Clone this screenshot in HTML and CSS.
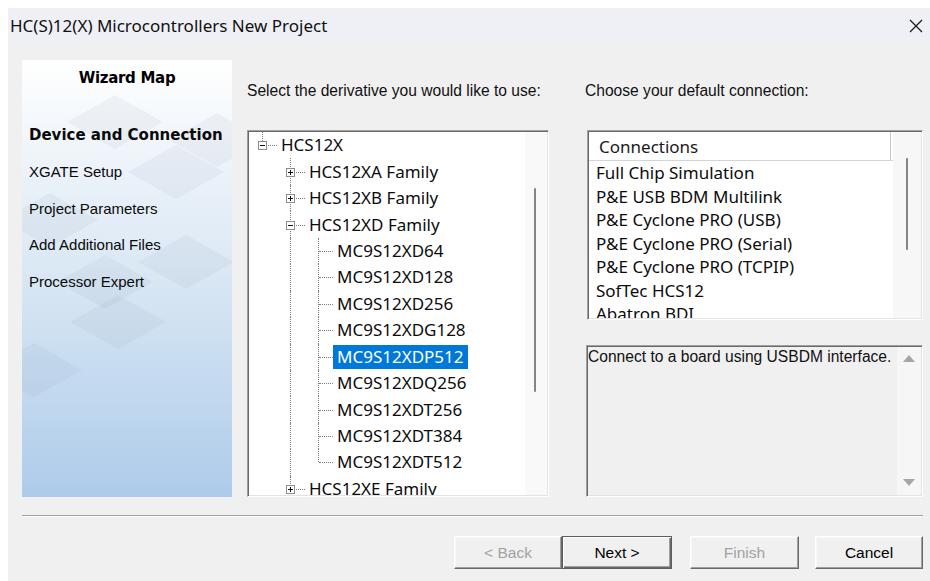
FILE: index.html
```html
<!DOCTYPE html>
<html lang="en">
<head>
<meta charset="utf-8">
<title>HC(S)12(X) Microcontrollers New Project</title>
<link rel="stylesheet" href="styles.css">
</head>
<body>
<div class="window">
  <header class="titlebar">
    <span class="title">HC(S)12(X) Microcontrollers New Project</span>
    <button class="close" aria-label="Close">
      <svg width="14" height="14" viewBox="0 0 14 14"><path d="M1 1L13 13M13 1L1 13" stroke="#1b1b1b" stroke-width="1.3" fill="none"/></svg>
    </button>
  </header>

  <div class="dialog">
    <div class="main">
      <aside class="wizard-map">
        <svg class="map-art" width="210" height="437" viewBox="0 0 210 437" aria-hidden="true">
          <g fill="#6f8299" fill-opacity="0.07">
            <polygon points="93,35 141,62 93,89 45,62"/>
            <polygon points="195,53 243,80 195,107 147,80"/>
            <polygon points="154,85 202,112 154,139 106,112"/>
            <polygon points="28,133 76,160 28,187 -20,160"/>
            <polygon points="164,175 212,202 164,229 116,202"/>
            <polygon points="83,195 131,222 83,249 35,222"/>
            <polygon points="96,235 144,262 96,289 48,262"/>
            <polygon points="12,283 60,310 12,337 -36,310"/>
          </g>
        </svg>
        <h2 class="map-title">Wizard Map</h2>
        <ul class="steps">
          <li class="current">Device and Connection</li>
          <li>XGATE Setup</li>
          <li>Project Parameters</li>
          <li>Add Additional Files</li>
          <li>Processor Expert</li>
        </ul>
      </aside>

      <section class="col col-derivative">
        <p class="prompt">Select the derivative you would like to use:</p>
        <div class="tree sunken">
          <div class="tree-rows">
            <div class="row"><span class="c l"><i class="exp minus"></i></span><span class="lbl">HCS12X</span></div>
            <div class="row"><span class="c"></span><span class="c t"><i class="exp plus"></i></span><span class="lbl">HCS12XA Family</span></div>
            <div class="row"><span class="c"></span><span class="c t"><i class="exp plus"></i></span><span class="lbl">HCS12XB Family</span></div>
            <div class="row"><span class="c"></span><span class="c t"><i class="exp minus"></i></span><span class="lbl">HCS12XD Family</span></div>
            <div class="row"><span class="c"></span><span class="c v"></span><span class="c t"></span><span class="lbl">MC9S12XD64</span></div>
            <div class="row"><span class="c"></span><span class="c v"></span><span class="c t"></span><span class="lbl">MC9S12XD128</span></div>
            <div class="row"><span class="c"></span><span class="c v"></span><span class="c t"></span><span class="lbl">MC9S12XD256</span></div>
            <div class="row"><span class="c"></span><span class="c v"></span><span class="c t"></span><span class="lbl">MC9S12XDG128</span></div>
            <div class="row"><span class="c"></span><span class="c v"></span><span class="c t"></span><span class="lbl selected">MC9S12XDP512</span></div>
            <div class="row"><span class="c"></span><span class="c v"></span><span class="c t"></span><span class="lbl">MC9S12XDQ256</span></div>
            <div class="row"><span class="c"></span><span class="c v"></span><span class="c t"></span><span class="lbl">MC9S12XDT256</span></div>
            <div class="row"><span class="c"></span><span class="c v"></span><span class="c t"></span><span class="lbl">MC9S12XDT384</span></div>
            <div class="row"><span class="c"></span><span class="c v"></span><span class="c l"></span><span class="lbl">MC9S12XDT512</span></div>
            <div class="row"><span class="c"></span><span class="c t"><i class="exp plus"></i></span><span class="lbl">HCS12XE Family</span></div>
          </div>
          <div class="vscroll tree-scroll"><span class="thumb"></span></div>
        </div>
      </section>

      <section class="col col-connection">
        <p class="prompt">Choose your default connection:</p>
        <div class="list sunken">
          <div class="list-body">
            <div class="list-head"><span class="head-cell">Connections</span></div>
            <ul class="items">
              <li>Full Chip Simulation</li>
              <li>P&amp;E USB BDM Multilink</li>
              <li>P&amp;E Cyclone PRO (USB)</li>
              <li>P&amp;E Cyclone PRO (Serial)</li>
              <li>P&amp;E Cyclone PRO (TCPIP)</li>
              <li>SofTec HCS12</li>
              <li>Abatron BDI</li>
            </ul>
          </div>
          <div class="vscroll list-scroll"><span class="thumb"></span></div>
        </div>
        <div class="desc sunken">
          <p class="desc-text">Connect to a board using USBDM interface.</p>
          <div class="desc-scroll">
            <span class="arrow up"></span>
            <span class="arrow down"></span>
          </div>
        </div>
      </section>
    </div>

    <div class="separator"></div>

    <div class="buttons">
      <div class="pair">
        <button class="btn" disabled>&lt; Back</button>
        <button class="btn default">Next &gt;</button>
      </div>
      <button class="btn btn-finish" disabled>Finish</button>
      <button class="btn btn-cancel">Cancel</button>
    </div>
  </div>
</div>
</body>
</html>
```

FILE: styles.css
```css
* { box-sizing: border-box; }

html, body {
  margin: 0;
  padding: 0;
  background: #ffffff;
}

body {
  width: 930px;
  height: 581px;
  overflow: hidden;
  padding: 8px 0 0 8px;
  font-family: "Liberation Sans", Arial, sans-serif;
  color: #000;
}

.window {
  width: 922px;
  height: 573px;
  display: flex;
  flex-direction: column;
  background: #f0f0f0;
}

/* ---------- title bar ---------- */
.titlebar {
  height: 35px;
  flex: none;
  display: flex;
  align-items: center;
  justify-content: space-between;
  padding: 0 7px 0 2px;
  background: #eff0f6;
}

.title {
  font-family: "Noto Sans", sans-serif;
  font-size: 17px;
  color: #111;
  line-height: 20px;
  padding-top: 1px;
}

.close {
  border: 0;
  background: none;
  padding: 0;
  width: 14px;
  height: 14px;
  display: flex;
}

/* ---------- dialog body ---------- */
.dialog {
  flex: 1;
  display: flex;
  flex-direction: column;
}

.main {
  display: flex;
  padding: 17px 0 0 14px;
  height: 454px;
}

/* ---------- wizard map ---------- */
.wizard-map {
  position: relative;
  width: 210px;
  height: 437px;
  flex: none;
  overflow: hidden;
  background: linear-gradient(#ffffff 0%, #eef4fa 22%, #d9e7f4 50%, #c3d9ef 75%, #adcbea 100%);
}

.map-art {
  position: absolute;
  left: 0;
  top: 0;
}

.map-title {
  position: relative;
  margin: 0;
  padding-top: 9px;
  text-align: center;
  font-family: "DejaVu Sans", sans-serif;
  font-weight: bold;
  font-size: 15px;
  line-height: 18px;
  letter-spacing: -0.3px;
}

.steps {
  position: relative;
  list-style: none;
  margin: 30px 0 0;
  padding: 0 0 0 7px;
  font-size: 15px;
  color: #0a0a0a;
}

.steps li {
  height: 36.75px;
  line-height: 36.75px;
  white-space: nowrap;
}

.steps li.current {
  font-family: "DejaVu Sans", sans-serif;
  font-weight: bold;
}

/* ---------- columns ---------- */
.col {
  display: flex;
  flex-direction: column;
}

.col-derivative {
  width: 302px;
  margin-left: 15px;
}

.col-connection {
  width: 337px;
  margin-left: 37px;
}

.prompt {
  margin: 0;
  height: 70px;
  padding: 22px 0 0 0;
  font-size: 15.6px;
  line-height: 18px;
  color: #111;
  white-space: nowrap;
}

.col-connection .prompt { margin-left: -1px; }

/* sunken 3D frame used by the tree, list and description */
.sunken {
  border: 1px solid;
  border-color: #a0a0a0 #ffffff #ffffff #a0a0a0;
  padding: 1px;
  box-shadow: inset 1px 1px #696969, inset -1px -1px #e3e3e3;
}

/* ---------- derivative tree ---------- */
.tree {
  height: 367px;
  display: flex;
  background: #ffffff;
  overflow: hidden;
}

.tree-rows {
  width: 276px;
  flex: none;
  overflow: hidden;
  background: #fff;
}

.row {
  display: flex;
  align-items: center;
  height: 26.45px;
  white-space: nowrap;
}

.c {
  position: relative;
  flex: none;
  width: 28px;
  height: 100%;
}

.c.v::before,
.c.t::before,
.c.l::before {
  content: "";
  position: absolute;
  left: 13px;
  top: 0;
  bottom: 0;
  border-left: 1px dotted #7c7c7c;
}

.c.l::before { bottom: 50%; }

.c.t::after,
.c.l::after {
  content: "";
  position: absolute;
  left: 14px;
  right: 0;
  top: 50%;
  border-top: 1px dotted #7c7c7c;
}

.exp {
  position: absolute;
  z-index: 1;
  left: 9px;
  top: calc(50% - 4px);
  width: 9px;
  height: 9px;
  border: 1px solid #8c8c8c;
  background: #fff;
}

.exp::before {
  content: "";
  position: absolute;
  left: 1px;
  top: 3px;
  width: 5px;
  height: 1px;
  background: #111;
}

.exp.plus::after {
  content: "";
  position: absolute;
  left: 3px;
  top: 1px;
  width: 1px;
  height: 5px;
  background: #111;
}

.lbl {
  padding: 0 4px;
  height: 24px;
  line-height: 24px;
  font-family: "Noto Sans", sans-serif;
  font-size: 17px;
  color: #0c0c0c;
}

.lbl.selected {
  background: #0078d7;
  color: #ffffff;
}

/* thin overlay scrollbars */
.vscroll {
  position: relative;
  flex: 1;
  background: #f9f9f9;
}

.vscroll .thumb {
  position: absolute;
  width: 2px;
  background: #858585;
  border-radius: 1px;
}

.tree-scroll .thumb {
  left: 9px;
  top: 56px;
  height: 204px;
}

/* ---------- connection list ---------- */
.list {
  height: 190px;
  margin-left: 1px;
  display: flex;
  background: #ffffff;
  overflow: hidden;
}

.list-body {
  width: 304px;
  flex: none;
  overflow: hidden;
}

.list-head {
  height: 29px;
  border-bottom: 1px solid #d5d5d5;
}

.head-cell {
  display: block;
  width: 302px;
  height: 28px;
  padding-left: 10px;
  border-right: 1px solid #c8c8c8;
  font-family: "Noto Sans", sans-serif;
  font-size: 17px;
  line-height: 30px;
  color: #1a1a1a;
}

.items {
  list-style: none;
  margin: 0;
  padding: 0 0 0 7px;
}

.items li {
  height: 23.5px;
  line-height: 24.5px;
  font-family: "Noto Sans", sans-serif;
  font-size: 17px;
  color: #0c0c0c;
  white-space: nowrap;
}

.list-scroll {
  background: #f7f7f7;
}

.list-scroll .thumb {
  left: 13px;
  top: 26px;
  height: 92px;
}

/* ---------- description ---------- */
.desc {
  height: 152px;
  margin-top: 25px;
  display: flex;
  background: #f0f0f0;
}

.desc-text {
  margin: 0;
  width: 309px;
  flex: none;
  padding-top: 1px;
  font-size: 15.6px;
  line-height: 18px;
  color: #111;
  white-space: nowrap;
}

.desc-scroll {
  flex: 1;
  display: flex;
  flex-direction: column;
  justify-content: space-between;
  align-items: center;
  padding: 8px 0 9px;
  background: #f6f6f6;
}

.arrow {
  width: 0;
  height: 0;
  border-left: 6px solid transparent;
  border-right: 6px solid transparent;
}

.arrow.up { border-bottom: 7px solid #a6a6a6; }
.arrow.down { border-top: 7px solid #a6a6a6; }

/* ---------- bottom bar ---------- */
.separator {
  margin: 18px 0 0 14px;
  width: 901px;
  height: 2px;
  border-top: 1px solid #a0a0a0;
  border-bottom: 1px solid #ffffff;
}

.buttons {
  display: flex;
  justify-content: flex-end;
  padding-right: 7px;
  margin-top: 19px;
}

.pair {
  display: flex;
}

.btn {
  height: 33px;
  width: 108px;
  padding: 0;
  font-family: "Liberation Sans", Arial, sans-serif;
  font-size: 15.5px;
  color: #000;
  background: #f0f0f0;
  border: 1px solid;
  border-color: #ffffff #696969 #696969 #ffffff;
  box-shadow: inset -1px -1px #a0a0a0, inset 1px 1px #f8f8f8;
}

.btn:disabled {
  color: #a2a2a2;
}

.btn.default {
  width: 110px;
  border: 1px solid #5e5e5e;
  box-shadow: inset 1px 1px #ffffff, inset -1px -1px #696969, inset -2px -2px #a0a0a0;
}

.btn-finish {
  width: 109px;
  margin-left: 18px;
}

.btn-cancel {
  margin-left: 16px;
}
```
